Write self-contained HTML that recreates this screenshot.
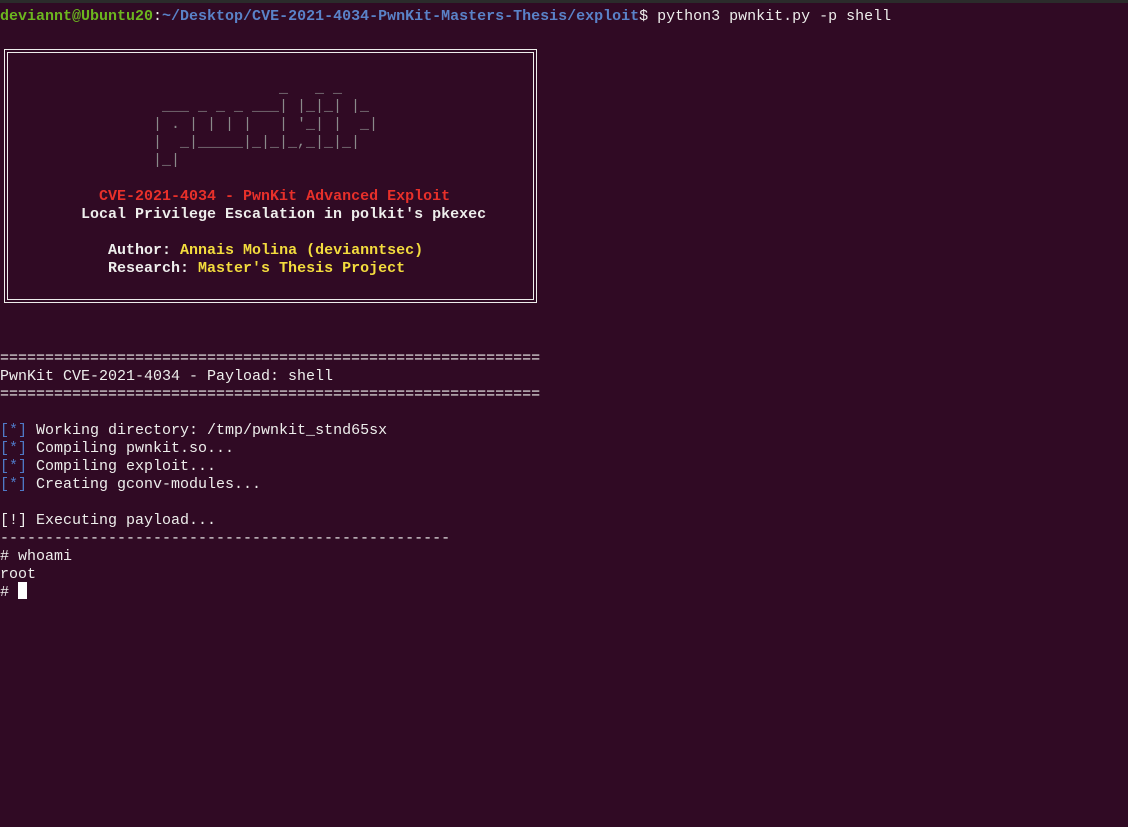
<!DOCTYPE html>
<html><head><meta charset="utf-8"><style>
html,body{margin:0;padding:0;background:#300a24;width:1128px;height:827px;overflow:hidden}
.top{position:absolute;left:0;top:0;width:1128px;height:3px;background:#2b2b2b}
pre{position:absolute;left:0;top:8px;margin:0;font-family:"Liberation Mono","DejaVu Sans Mono",monospace;font-size:15px;line-height:18px;color:#eeeeec;white-space:pre}
.g{color:#6cb61f;font-weight:bold}.p{color:#5a82c8;font-weight:bold}
.r{color:#e8302a;font-weight:bold}.y{color:#f3dc3d;font-weight:bold}.b{font-weight:bold}
.a{color:#8a8a8a}.k{color:#4f79c6}
.box{position:absolute;left:4px;top:49px;width:531px;height:252px;border:1px solid #eeeeec}
.box::after{content:"";position:absolute;left:2px;top:2px;right:2px;bottom:2px;border:1px solid #eeeeec}
.cur{position:absolute;left:18px;top:582px;width:9px;height:17px;background:#fff}
</style></head><body>
<div class="top"></div>
<div class="box"></div>
<pre><span class="g">deviannt@Ubuntu20</span>:<span class="p">~/Desktop/CVE-2021-4034-PwnKit-Masters-Thesis/exploit</span>$ python3 pwnkit.py -p shell



<span class="a">                               _   _ _   
                  ___ _ _ _ ___| |_|_| |_ 
                 | . | | | |   | '_| |  _|
                 |  _|_____|_|_|_,_|_|_|  
                 |_|                      </span>

           <span class="r">CVE-2021-4034 - PwnKit Advanced Exploit</span>
         <span class="b">Local Privilege Escalation in polkit's pkexec</span>

            <span class="b">Author: </span><span class="y">Annais Molina (devianntsec)</span>
            <span class="b">Research: </span><span class="y">Master's Thesis Project</span>




============================================================
PwnKit CVE-2021-4034 - Payload: shell
============================================================

<span class="k">[*]</span> Working directory: /tmp/pwnkit_stnd65sx
<span class="k">[*]</span> Compiling pwnkit.so...
<span class="k">[*]</span> Compiling exploit...
<span class="k">[*]</span> Creating gconv-modules...

[!] Executing payload...
--------------------------------------------------
# whoami
root
# </pre>
<div class="cur"></div>
</body></html>
